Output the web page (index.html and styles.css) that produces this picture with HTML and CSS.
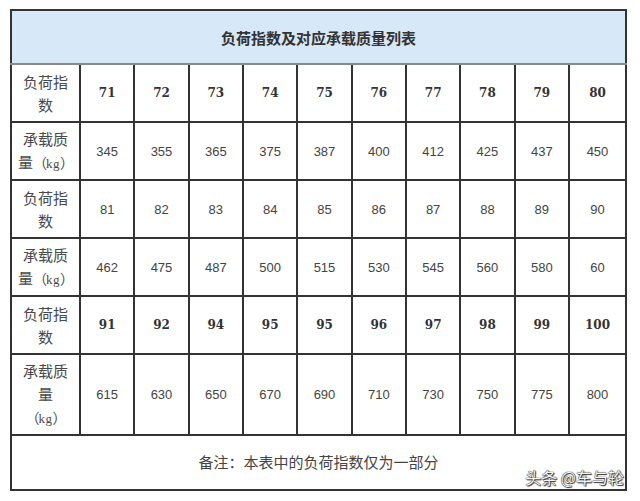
FILE: index.html
```html
<!DOCTYPE html>
<html lang="zh">
<head>
<meta charset="utf-8">
<link rel="stylesheet" href="styles.css">
</head>
<body>
<div class="page">
  <div class="wrap">
    <table class="load">
      <colgroup>
        <col class="c-head">
        <col><col><col><col><col><col><col><col><col><col class="c-last">
      </colgroup>
      <tr class="r-title"><th colspan="11" class="title">负荷指数及对应承载质量列表</th></tr>
      <tr class="r-row">
        <td class="lbl">负荷指<br>数</td>
        <td class="b">71</td><td class="b">72</td><td class="b">73</td><td class="b">74</td><td class="b">75</td><td class="b">76</td><td class="b">77</td><td class="b">78</td><td class="b">79</td><td class="b">80</td>
      </tr>
      <tr class="r-row">
        <td class="lbl">承载质<br>量<span class="kg">（<span class="kgl">kg</span>）</span></td>
        <td>345</td><td>355</td><td>365</td><td>375</td><td>387</td><td>400</td><td>412</td><td>425</td><td>437</td><td>450</td>
      </tr>
      <tr class="r-row">
        <td class="lbl">负荷指<br>数</td>
        <td>81</td><td>82</td><td>83</td><td>84</td><td>85</td><td>86</td><td>87</td><td>88</td><td>89</td><td>90</td>
      </tr>
      <tr class="r-row">
        <td class="lbl">承载质<br>量<span class="kg">（<span class="kgl">kg</span>）</span></td>
        <td>462</td><td>475</td><td>487</td><td>500</td><td>515</td><td>530</td><td>545</td><td>560</td><td>580</td><td>60</td>
      </tr>
      <tr class="r-row">
        <td class="lbl">负荷指<br>数</td>
        <td class="b">91</td><td class="b">92</td><td class="b">94</td><td class="b">95</td><td class="b">95</td><td class="b">96</td><td class="b">97</td><td class="b">98</td><td class="b">99</td><td class="b">100</td>
      </tr>
      <tr class="r-tall">
        <td class="lbl">承载质<br>量<br><span class="kg">（<span class="kgl">kg</span>）</span></td>
        <td>615</td><td>630</td><td>650</td><td>670</td><td>690</td><td>710</td><td>730</td><td>750</td><td>775</td><td>800</td>
      </tr>
      <tr class="r-foot"><td colspan="11" class="note">备注：本表中的负荷指数仅为一部分</td></tr>
    </table>
    <div class="mark">头条 @车与轮</div>
  </div>
</div>
</body>
</html>
```

FILE: styles.css
```css
html, body {
  margin: 0;
  padding: 0;
  background: #ffffff;
}
.page {
  padding: 9px 0 0 10px;
}
.wrap {
  position: relative;
  width: 617px;
}
.load {
  border-collapse: collapse;
  table-layout: fixed;
  width: 617px;
  border: 2px solid #5a5a5a;
  font-family: "Liberation Sans", "Noto Sans CJK SC", sans-serif;
  color: #444;
}
.c-head { width: 69px; }
.c-last { width: 57px; }
.load td, .load th {
  border: 2px solid #333;
  text-align: center;
  vertical-align: middle;
  padding: 0;
  font-size: 13px;
}
.load th.title {
  background: #d7e8f8;
  font-family: "Noto Sans CJK SC", sans-serif;
  font-weight: bold;
  font-size: 15px;
  color: #333;
  border-bottom-color: #8a8a8a;
}
.r-title { height: 54px; }
.r-row { height: 58px; }
.r-tall { height: 81px; }
.r-foot { height: 55px; }
.load td.lbl {
  font-family: "Noto Sans CJK SC", sans-serif;
  font-size: 15px;
  line-height: 23px;
  color: #4a4a4a;
}
.kg {
  font-size: 14px;
  letter-spacing: -1px;
}
.kgl {
  font-family: "Liberation Serif", serif;
  font-size: 13px;
  letter-spacing: 0.5px;
}
.load td.b {
  font-family: "DejaVu Serif", serif;
  font-weight: bold;
  font-size: 12px;
  color: #333;
}
.load td.note {
  font-family: "Noto Sans CJK SC", sans-serif;
  font-size: 15px;
  color: #444;
  padding-bottom: 2px;
}
.mark {
  position: absolute;
  right: 3px;
  bottom: 2px;
  font-family: "Noto Sans CJK SC", sans-serif;
  font-size: 16px;
  color: #f4f4f4;
  text-shadow: 0 0 1px #222, 0 0 1px #222, 1px 1px 1px #333;
}
```
